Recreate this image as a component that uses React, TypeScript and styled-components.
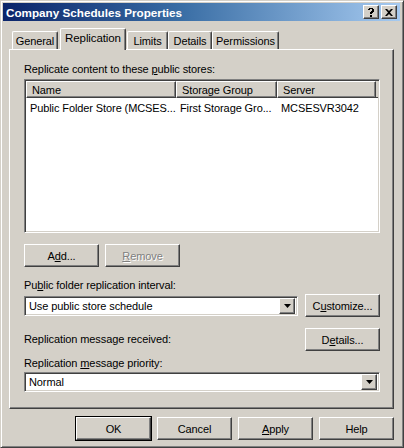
import React from "react";
import styled, { createGlobalStyle, css } from "styled-components";

const Global = createGlobalStyle`
  html, body { margin: 0; padding: 0; background: #d4d0c8; }
  body {
    font-family: "Liberation Sans", Arial, sans-serif;
    font-size: 11px;
    letter-spacing: -0.1px;
    color: #000;
  }
`;

const raised = css`
  border-top: 1px solid #ffffff;
  border-left: 1px solid #ffffff;
  border-right: 1px solid #404040;
  border-bottom: 1px solid #404040;
  box-shadow: inset -1px -1px 0 #808080, inset 1px 1px 0 #d4d0c8;
`;

const sunken = css`
  border-top: 1px solid #808080;
  border-left: 1px solid #808080;
  border-right: 1px solid #ffffff;
  border-bottom: 1px solid #ffffff;
  box-shadow: inset 1px 1px 0 #404040, inset -1px -1px 0 #d4d0c8;
`;

const Window = styled.div`
  box-sizing: border-box;
  width: 404px;
  height: 448px;
  background: #d4d0c8;
  border-top: 1px solid #d4d0c8;
  border-left: 1px solid #d4d0c8;
  border-right: 1px solid #404040;
  border-bottom: 1px solid #404040;
  box-shadow: inset 1px 1px 0 #ffffff, inset -1px -1px 0 #808080;
  padding: 2px 3px 0 2px;
  display: flex;
  flex-direction: column;
`;

const TitleBar = styled.div`
  height: 18px;
  display: flex;
  align-items: center;
  justify-content: space-between;
  background: linear-gradient(to right, #0a246a 0%, #3a6ea5 45%, #a6caf0 100%);
  padding: 0 3px 0 3px;
`;

const TitleText = styled.span`
  color: #ffffff;
  font-family: "Liberation Sans", Arial, sans-serif;
  font-weight: bold;
  font-size: 11.7px;
  letter-spacing: 0;
`;

const TitleButtons = styled.div`
  display: flex;
  gap: 2px;
`;

const CaptionButton = styled.div`
  box-sizing: border-box;
  width: 16px;
  height: 14px;
  background: #d4d0c8;
  ${raised};
  display: flex;
  align-items: center;
  justify-content: center;
`;

const Body = styled.div`
  flex: 1;
  display: flex;
  flex-direction: column;
  padding: 7px 6px 0 6px;
`;

const TabRow = styled.div`
  display: flex;
  align-items: flex-end;
  height: 21px;
  padding-left: 3px;
  position: relative;
  z-index: 1;
`;

const Tab = styled.div<{ $active?: boolean; $w: number; $mr?: number }>`
  box-sizing: border-box;
  width: ${(p) => p.$w}px;
  height: ${(p) => (p.$active ? 22 : 18)}px;
  margin-right: ${(p) => p.$mr ?? 0}px;
  margin-bottom: ${(p) => (p.$active ? -1 : 0)}px;
  background: #d4d0c8;
  border-top: 1px solid #ffffff;
  border-left: 1px solid #ffffff;
  border-right: 1px solid #404040;
  border-radius: 2px 2px 0 0;
  box-shadow: inset -1px 0 0 #808080;
  display: flex;
  align-items: center;
  justify-content: center;
  padding-bottom: ${(p) => (p.$active ? 3 : 0)}px;
  font-size: ${(p) => (p.$active ? 11.5 : 11)}px;
  position: relative;
  z-index: ${(p) => (p.$active ? 2 : 0)};
`;

const Panel = styled.div`
  box-sizing: border-box;
  height: 360px;
  border-top: 1px solid #ffffff;
  border-left: 1px solid #ffffff;
  border-right: 1px solid #404040;
  border-bottom: 1px solid #404040;
  box-shadow: inset -1px -1px 0 #808080;
  padding: 13px 13px 0 14px;
  display: flex;
  flex-direction: column;
`;

const Label = styled.div<{ $mt?: number }>`
  line-height: 13px;
  margin-top: ${(p) => p.$mt ?? 0}px;
  white-space: nowrap;
`;

const U = styled.span`
  text-decoration: underline;
  text-underline-offset: 1px;
`;

const ListBox = styled.div`
  box-sizing: border-box;
  height: 154px;
  margin-top: 3px;
  background: #ffffff;
  ${sunken};
  padding: 1px;
  display: flex;
  flex-direction: column;
`;

const Header = styled.div`
  display: flex;
  height: 17px;
`;

const HeaderCell = styled.div<{ $w: number }>`
  box-sizing: border-box;
  width: ${(p) => p.$w}px;
  height: 17px;
  background: #d4d0c8;
  ${raised};
  padding-left: 5px;
  display: flex;
  align-items: center;
`;

const HeaderFill = styled.div`
  flex: 1;
  background: #d4d0c8;
  border-bottom: 1px solid #404040;
  box-sizing: border-box;
  height: 17px;
`;

const Row = styled.div`
  display: flex;
  height: 15px;
  align-items: center;
  margin-top: 2px;
`;

const Cell = styled.div<{ $w: number }>`
  width: ${(p) => p.$w}px;
  padding-left: 4px;
  box-sizing: border-box;
  white-space: nowrap;
`;

const ButtonRow = styled.div<{ $mt?: number }>`
  display: flex;
  gap: 6px;
  margin-top: ${(p) => p.$mt ?? 0}px;
`;

const Button = styled.div<{ $disabled?: boolean; $default?: boolean }>`
  box-sizing: border-box;
  width: 75px;
  height: 23px;
  background: #d4d0c8;
  ${raised};
  display: flex;
  align-items: center;
  justify-content: center;
  ${(p) =>
    p.$disabled &&
    css`
      color: #808080;
      text-shadow: 1px 1px 0 #ffffff;
    `}
  ${(p) =>
    p.$default &&
    css`
      outline: 1px solid #000000;
      outline-offset: 0;
    `}
`;

const FieldRow = styled.div<{ $mt?: number }>`
  display: flex;
  align-items: center;
  justify-content: space-between;
  margin-top: ${(p) => p.$mt ?? 0}px;
`;

const Combo = styled.div<{ $w?: number }>`
  box-sizing: border-box;
  ${(p) => (p.$w ? `width: ${p.$w}px;` : "flex: 1;")}
  height: 20px;
  background: #ffffff;
  ${sunken};
  display: flex;
  align-items: center;
  padding: 2px;
`;

const ComboText = styled.div`
  flex: 1;
  padding-left: 2px;
`;

const ComboArrow = styled.div`
  box-sizing: border-box;
  width: 16px;
  height: 16px;
  background: #d4d0c8;
  ${raised};
  display: flex;
  align-items: center;
  justify-content: center;
`;

const FooterRow = styled.div`
  display: flex;
  justify-content: flex-end;
  gap: 6px;
  margin-top: 8px;
`;

const Arrow = () => (
  <svg width="7" height="4" viewBox="0 0 7 4">
    <path d="M0 0h7L3.5 4z" fill="#000" />
  </svg>
);

const HelpGlyph = () => (
  <svg width="8" height="9" viewBox="0 0 8 9">
    <path d="M1 1h1V0h4v1h1v3H6v1H5v1H3V4h1V3h1V1H3v1H1z M3 7h2v2H3z" fill="#000" />
  </svg>
);

const CloseGlyph = () => (
  <svg width="8" height="7" viewBox="0 0 8 7">
    <path d="M0 0h2l2 2 2-2h2L5 3.5 8 7H6L4 5 2 7H0l3-3.5z" fill="#000" />
  </svg>
);

export default function App() {
  return (
    <>
      <Global />
      <Window>
        <TitleBar>
          <TitleText>Company Schedules Properties</TitleText>
          <TitleButtons>
            <CaptionButton>
              <HelpGlyph />
            </CaptionButton>
            <CaptionButton>
              <CloseGlyph />
            </CaptionButton>
          </TitleButtons>
        </TitleBar>
        <Body>
          <TabRow>
            <Tab $w={46} $mr={2}>General</Tab>
            <Tab $w={66} $mr={1} $active>Replication</Tab>
            <Tab $w={41}>Limits</Tab>
            <Tab $w={44}>Details</Tab>
            <Tab $w={67}>Permissions</Tab>
          </TabRow>
          <Panel>
            <Label>
              Replicate content to these <U>p</U>ublic stores:
            </Label>
            <ListBox>
              <Header>
                <HeaderCell $w={150}>Name</HeaderCell>
                <HeaderCell $w={101}>Storage Group</HeaderCell>
                <HeaderCell $w={99}>Server</HeaderCell>
                <HeaderFill />
              </Header>
              <Row>
                <Cell $w={150}>Public Folder Store (MCSES...</Cell>
                <Cell $w={101}>First Storage Gro...</Cell>
                <Cell $w={99}>MCSESVR3042</Cell>
              </Row>
            </ListBox>
            <ButtonRow $mt={11}>
              <Button>
                A<U>d</U>d...
              </Button>
              <Button $disabled>
                <U>R</U>emove
              </Button>
            </ButtonRow>
            <Label $mt={12}>
              Pu<U>b</U>lic folder replication interval:
            </Label>
            <FieldRow $mt={2}>
              <Combo $w={274}>
                <ComboText>Use public store schedule</ComboText>
                <ComboArrow>
                  <Arrow />
                </ComboArrow>
              </Combo>
              <Button>
                C<U>u</U>stomize...
              </Button>
            </FieldRow>
            <FieldRow $mt={11}>
              <Label>Replication message received:</Label>
              <Button>
                D<U>e</U>tails...
              </Button>
            </FieldRow>
            <Label $mt={6}>
              Replication <U>m</U>essage priority:
            </Label>
            <FieldRow $mt={2}>
              <Combo>
                <ComboText>Normal</ComboText>
                <ComboArrow>
                  <Arrow />
                </ComboArrow>
              </Combo>
            </FieldRow>
          </Panel>
          <FooterRow>
            <Button $default>OK</Button>
            <Button>Cancel</Button>
            <Button>
              <U>A</U>pply
            </Button>
            <Button>Help</Button>
          </FooterRow>
        </Body>
      </Window>
    </>
  );
}
